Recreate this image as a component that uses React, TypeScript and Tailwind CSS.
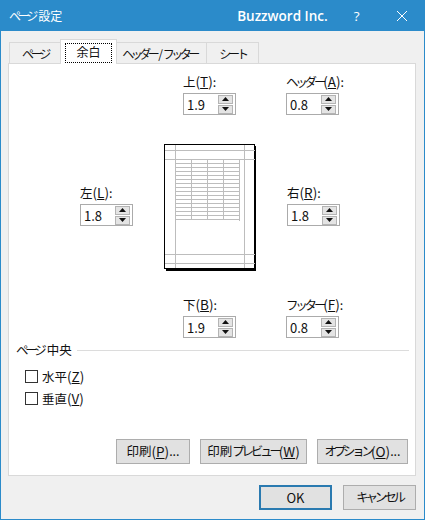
import type { ReactNode } from "react";

const FONT = "font-['Noto_Sans_CJK_JP','Liberation_Sans',sans-serif]";

// Meiryo UI squeezes its kana, so kana runs get tighter tracking
function Kana({ children }: { children: ReactNode }) {
  return <span className="tracking-[-3.2px]">{children}</span>;
}

function Key({ k }: { k: string }) {
  return (
    <span className="text-[13.5px]">
      (<span className="underline">{k}</span>)
    </span>
  );
}

function Spinner({ value }: { value: string }) {
  return (
    <div className="flex h-[22px] w-[53px] items-center justify-between border border-[#ababab] bg-white pr-[2px] pl-[3px]">
      <span className="text-[13px] leading-none">{value}</span>
      <div className="flex flex-col gap-[1px]">
        <div className="flex h-[9px] w-[15px] items-center justify-center border border-[#b4b4b4] bg-[#e4e4e4]">
          <svg aria-hidden="true" height="4" viewBox="0 0 7 4" width="7">
            <path d="M3.5 0 7 4H0z" fill="#111" />
          </svg>
        </div>
        <div className="flex h-[9px] w-[15px] items-center justify-center border border-[#b4b4b4] bg-[#e4e4e4]">
          <svg aria-hidden="true" height="4" viewBox="0 0 7 4" width="7">
            <path d="M0 0h7L3.500 4z" fill="#111" />
          </svg>
        </div>
      </div>
    </div>
  );
}

function Field({ label, value }: { label: ReactNode; value: string }) {
  return (
    <div className="flex w-[53px] flex-col">
      <div className="h-[18px] whitespace-nowrap text-[12.5px] leading-[13px]">
        {label}
      </div>
      <Spinner value={value} />
    </div>
  );
}

function PagePreview() {
  const rows = Array.from({ length: 16 }, (_, i) => 15 + i * 4);
  return (
    <svg
      aria-hidden="true"
      className="shrink-0"
      height="127"
      shapeRendering="crispEdges"
      viewBox="0 0 92 127"
      width="92"
    >
      <rect fill="#000" height="125" width="90" x="2" y="2" />
      <rect fill="#fff" height="124" stroke="#000" width="90" x="0.5" y="0.5" />
      <g stroke="#bdbdbd">
        <path d="M11.500 1v123M80.500 1v123M1 6.500h90M1 15.500h90M1 110.500h90M1 119.500h90" />
        <path d="M27.500 15v61M43.500 15v61M59.500 15v61M75 15.500v61" />
        {rows.map((y) => (
          <path d={`M11 ${y + 0.5}h64`} key={y} />
        ))}
      </g>
    </svg>
  );
}

function Checkbox({ label }: { label: ReactNode }) {
  return (
    <div className="flex h-[22px] items-center gap-[4px] text-[12.5px]">
      <div className="h-[13px] w-[13px] border border-[#333] bg-white" />
      <span>{label}</span>
    </div>
  );
}

function Button({ children, width }: { children: ReactNode; width: string }) {
  return (
    <div
      className={`flex h-[25px] items-center justify-center border border-[#adadad] bg-[#e1e1e1] text-[12.5px] whitespace-nowrap ${width}`}
    >
      {children}
    </div>
  );
}

export default function App() {
  return (
    <div
      className={`flex h-[520px] w-[425px] flex-col border border-[#2b8bca] bg-[#f0f0f0] text-[#111] ${FONT}`}
    >
      <div className="flex h-[30px] shrink-0 items-center bg-[#2b8bca] pl-[8px] text-white">
        <span className="text-[12px]">
          <Kana>ページ</Kana>
          <span className="ml-[3px]">設定</span>
        </span>
        <span className="ml-[175px] font-['Open_Sans',sans-serif] text-[13.5px] font-semibold">
          Buzzword Inc.
        </span>
        <span className="ml-[26px] font-['Open_Sans',sans-serif] text-[13.5px]">
          ?
        </span>
        <svg
          aria-hidden="true"
          className="ml-[37px]"
          height="10"
          viewBox="0 0 10 10"
          width="10"
        >
          <path d="M0 0l10 10M10 0 0 10" fill="none" stroke="#fff" />
        </svg>
      </div>

      <div className="flex flex-1 flex-col pr-[8px] pl-[7px]">
        <div className="relative z-10 flex h-[33px] items-end pl-[1px] text-[12px]">
          <div className="-mr-px flex h-[22px] w-[52px] items-center justify-center border border-b-0 border-[#d9d9d9]">
            <Kana>ページ</Kana>
          </div>
          <div className="relative flex h-[25px] w-[57px] items-center justify-center border border-b-0 border-[#d9d9d9] bg-white">
            余白
            <div className="absolute top-[3px] right-[4px] bottom-[1px] left-[4px] border border-dotted border-black" />
          </div>
          <div className="-ml-px flex h-[22px] w-[91px] items-center justify-center border border-b-0 border-[#d9d9d9] pr-[4px]">
            <span className="tracking-[-3.5px]">ヘッダー</span>
            <span className="ml-[2px]">/</span>
            <span className="tracking-[-3.500px]">フッター</span>
          </div>
          <div className="-ml-px flex h-[22px] w-[53px] items-center justify-center border border-b-0 border-[#d9d9d9]">
            <Kana>シート</Kana>
          </div>
        </div>

        <div className="-mt-px flex h-[413px] flex-col border border-[#d9d9d9] bg-white">
          <div className="mt-[11px] ml-[174px] flex gap-[50px]">
            <Field
              label={
                <>
                  上<Key k="T" />:
                </>
              }
              value="1.9"
            />
            <Field
              label={
                <>
                  <Kana>ヘッダー</Kana>
                  <Key k="A" />:
                </>
              }
              value="0.8"
            />
          </div>

          <div className="mt-[29px] ml-[71px] flex items-start">
            <div className="mt-[42px]">
              <Field
                label={
                  <>
                    左<Key k="L" />:
                  </>
                }
                value="1.8"
              />
            </div>
            <div className="mx-[31px]">
              <PagePreview />
            </div>
            <div className="mt-[42px]">
              <Field
                label={
                  <>
                    右<Key k="R" />:
                  </>
                }
                value="1.8"
              />
            </div>
          </div>

          <div className="mt-[27px] ml-[174px] flex gap-[50px]">
            <Field
              label={
                <>
                  下<Key k="B" />:
                </>
              }
              value="1.9"
            />
            <Field
              label={
                <>
                  <Kana>フッター</Kana>
                  <Key k="F" />:
                </>
              }
              value="0.8"
            />
          </div>

          <div className="mt-[4px] mr-[6px] ml-[7px] flex h-[16px] items-center gap-[5px] text-[12.5px]">
            <span className="whitespace-nowrap">
              <Kana>ページ</Kana>
              <span className="ml-[3px]">中央</span>
            </span>
            <div className="h-px flex-1 bg-[#dcdcdc]" />
          </div>

          <div className="mt-[7px] ml-[16px] flex flex-col">
            <Checkbox
              label={
                <>
                  水平
                  <Key k="Z" />
                </>
              }
            />
            <Checkbox
              label={
                <>
                  垂直
                  <Key k="V" />
                </>
              }
            />
          </div>

          <div className="mt-[30px] mr-[7px] flex justify-end gap-[10px]">
            <Button width="w-[74px]">
              印刷
              <Key k="P" />
              ...
            </Button>
            <Button width="w-[107px]">
              <span>
                印刷<Kana>プレビュー</Kana>
              </span>
              <Key k="W" />
            </Button>
            <Button width="w-[91px]">
              <Kana>オプション</Kana>
              <Key k="O" />
              ...
            </Button>
          </div>
        </div>

        <div className="mt-[9px] flex justify-end gap-[11px]">
          <div className="flex h-[25px] w-[73px] items-center justify-center border-2 border-[#2a7ab0] bg-[#e1e1e1] text-[13px]">
            OK
          </div>
          <Button width="w-[73px]">
            <Kana>キャンセル</Kana>
          </Button>
        </div>
      </div>
    </div>
  );
}
